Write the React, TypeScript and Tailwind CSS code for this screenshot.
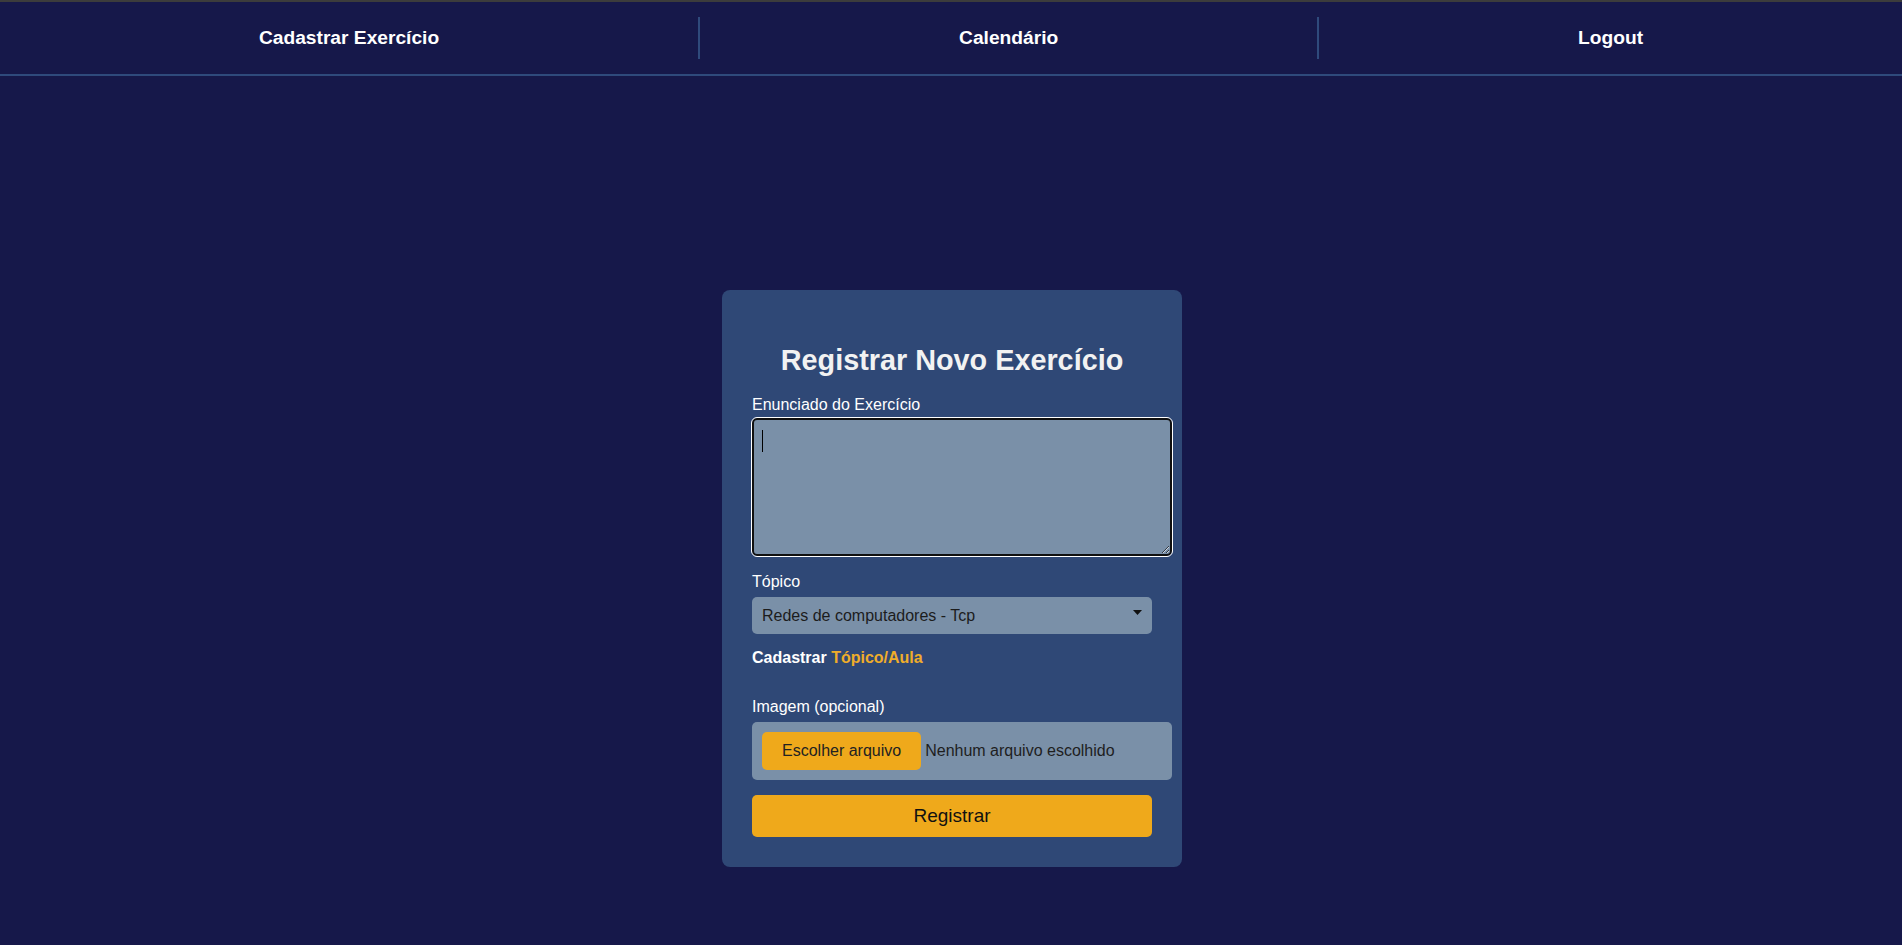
import React from "react";

export default function App() {
  const navItem =
    "flex-auto h-[42px] flex items-center justify-center text-white font-bold text-[19.2px]";
  return (
    <div className="min-h-screen bg-[#16184a] font-['Liberation_Sans',Arial,sans-serif]">
      <div className="h-[2px] bg-[#3c3c3c]" />
      <nav className="flex py-[15px] border-b-2 border-[#2f4a7c]">
        <div className={navItem + " border-r-2 border-[#2f4a7c]"}>Cadastrar Exercício</div>
        <div className={navItem + " border-r-2 border-[#2f4a7c]"}>Calendário</div>
        <div className={navItem}>Logout</div>
      </nav>
      <main className="flex justify-center pt-[214px] pb-[78px] pl-[2px]">
        <div className="w-[460px] bg-[#2f4876] rounded-lg px-[30px] pt-[53px] pb-[30px]">
          <h2 className="text-center text-[28.8px] font-bold leading-[34px] text-[#f2f2f2]">
            Registrar Novo Exercício
          </h2>
          <label className="block mt-[19px] text-white text-base leading-[18px]">
            Enunciado do Exercício
          </label>
          <div className="relative mt-[4px] w-[420px]">
            <textarea className="block w-[420px] h-[138px] bg-[#7a90a8] border-2 border-[#101010] rounded-[5px] outline outline-white resize-y" />
            <span className="pointer-events-none absolute left-[10px] top-[12px] w-px h-[22px] bg-black" />
          </div>
          <label className="block mt-[17px] text-white text-base leading-[18px]">Tópico</label>
          <div className="relative mt-[6px]">
            <select
              className="block w-full h-[37px] appearance-none bg-[#7a90a8] rounded-[5px] pl-[10px] text-base text-[#1c1c1c] outline-none"
              defaultValue="tcp"
            >
              <option value="tcp">Redes de computadores - Tcp</option>
            </select>
            <svg
              className="pointer-events-none absolute right-[10px] top-[13px]"
              width="9"
              height="5"
              viewBox="0 0 9 5"
            >
              <polygon points="0,0 9,0 4.5,5" fill="#111" />
            </svg>
          </div>
          <div className="mt-[15px] text-base leading-[18px] font-bold text-white">
            Cadastrar <span className="text-[#efad2a]">Tópico/Aula</span>
          </div>
          <label className="block mt-[31px] text-white text-base leading-[18px]">
            Imagem (opcional)
          </label>
          <div className="mt-[6px] w-[420px] h-[58px] bg-[#7a90a8] rounded-[5px] px-[10px] flex items-center">
            <div className="h-[38px] px-5 rounded-[5px] bg-[#efa91b] text-[#222] text-base flex items-center">
              Escolher arquivo
            </div>
            <span className="ml-1 text-base text-[#1e1e1e]">Nenhum arquivo escolhido</span>
          </div>
          <button className="mt-[15px] w-full h-[42px] rounded-[5px] bg-[#efa91b] text-[19px] text-[#111]">
            Registrar
          </button>
        </div>
      </main>
    </div>
  );
}
